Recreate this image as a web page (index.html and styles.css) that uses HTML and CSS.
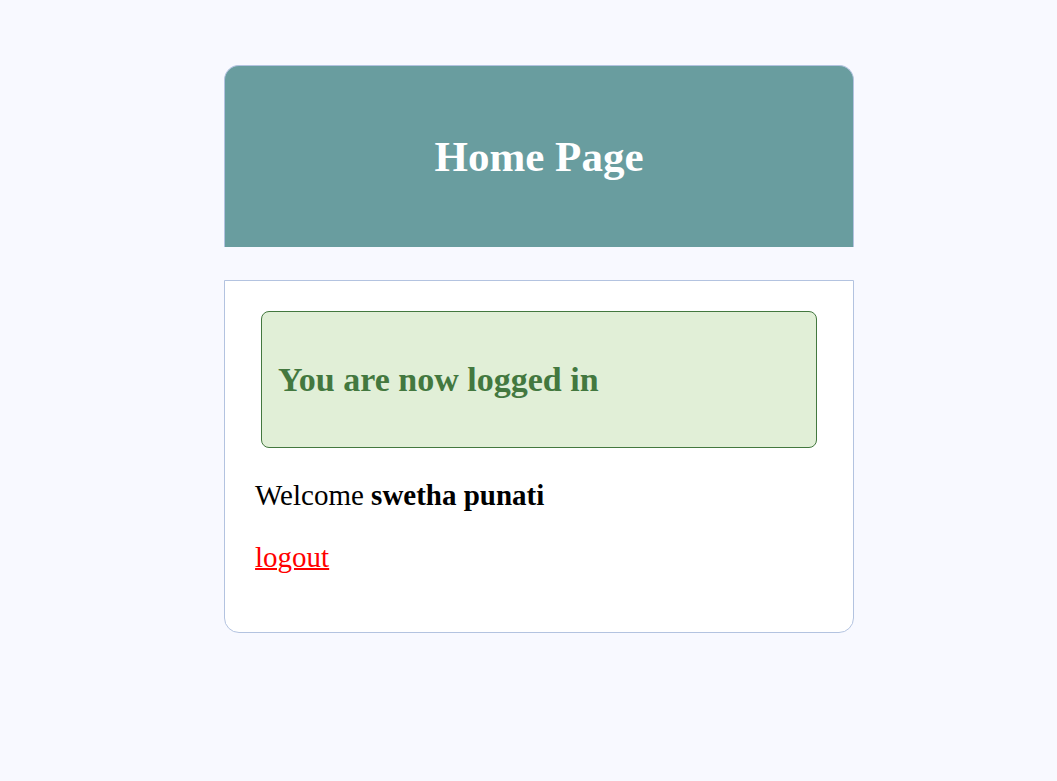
FILE: index.html
```html
<!DOCTYPE html>
<html lang="en">
<head>
<meta charset="utf-8">
<title>Home</title>
<link rel="stylesheet" href="styles.css">
</head>
<body>
<div class="header">
  <h2>Home Page</h2>
</div>
<div class="content">
  <div class="success">
    <h3>You are now logged in</h3>
  </div>
  <p>Welcome <strong>swetha punati</strong></p>
  <p><a class="logout" href="#">logout</a></p>
</div>
</body>
</html>
```

FILE: styles.css
```css
* {
  margin: 0;
  padding: 0;
  box-sizing: border-box;
}

body {
  padding: 0 0 0 21px;
  background: #f8f9ff;
  color: #000;
  font-family: "Liberation Serif", "Times New Roman", serif;
  font-size: 29px;
  line-height: 32px;
}

.header,
.content {
  width: 60.8%;
  min-width: 320px;
  margin: 0 auto;
  border: 1px solid #b3c3e0;
}

.header {
  margin-top: 65px;
  padding: 66px 33px;
  border-bottom: none;
  border-radius: 15px 15px 0 0;
  background: #699d9f;
  color: #fff;
  text-align: center;
}

.header h2 {
  font-size: 43px;
  line-height: 49px;
}

.content {
  margin-top: 33px;
  padding: 30px 30px 59px;
  border-radius: 0 0 15px 15px;
  background: #fff;
}

.success {
  margin: 0 6px 31px;
  padding: 48px 16px;
  border: 1px solid #43783f;
  border-radius: 8px;
  background: #e1efd7;
  color: #43783f;
}

.success h3 {
  font-size: 34px;
  line-height: 39px;
}

.content p + p {
  margin-top: 30px;
}

.logout {
  color: red;
  text-decoration-thickness: 2px;
}
```
